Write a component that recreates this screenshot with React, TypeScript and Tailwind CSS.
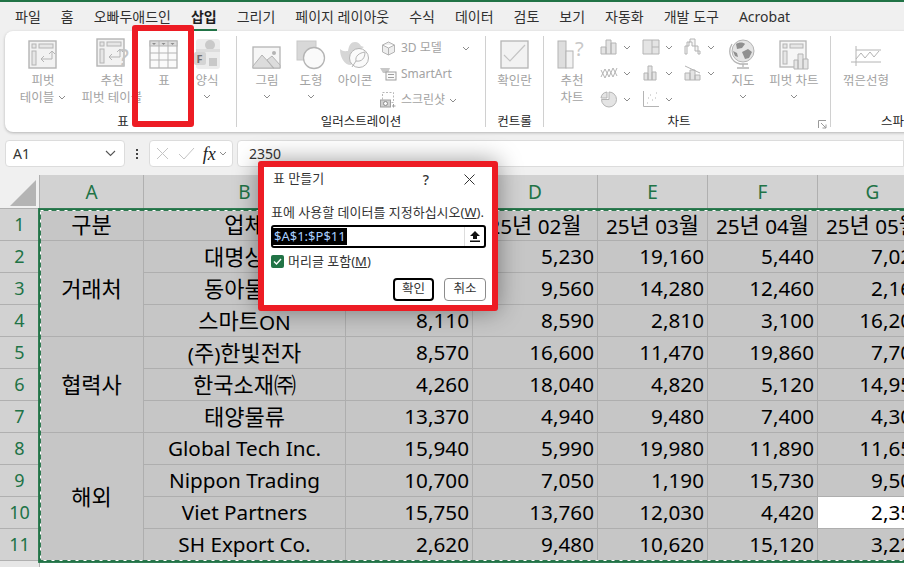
import React from "react";

const G = "#b4b4b4";
const L = "#e6e6e6";

const Chev = ({ className = "" }: { className?: string }) => (
  <svg width="8" height="5" viewBox="0 0 8 5" className={className}>
    <polyline points="1,1 4,4 7,1" fill="none" stroke="#8c8c8c" strokeWidth="1" />
  </svg>
);

const Pivot = () => (
  <svg width="30" height="30" viewBox="0 0 30 30">
    <rect x="1" y="1" width="27" height="27" fill="#f2f2f2" stroke={G} strokeWidth="1.4" />
    <rect x="4" y="4" width="4" height="4" fill={L} stroke={G} />
    <rect x="11" y="4" width="14" height="4" fill={L} stroke={G} />
    <rect x="4" y="11" width="4" height="14" fill={L} stroke={G} />
    <path d="M24 12v7h-11m3-3l-3 3 3 3M21 14l3-3 3 3" fill="none" stroke={G} />
  </svg>
);

const PivotQ = () => (
  <div className="relative w-[32px] h-[32px]">
    <Pivot />
    <span className="absolute right-[-1px] top-[7px] text-[24px] leading-[24px] text-[#c4c4c4]">?</span>
  </div>
);

const TableIcon = () => (
  <svg width="30" height="30" viewBox="0 0 30 30">
    <rect x="1" y="1" width="27" height="27" fill="#fafafa" stroke={G} strokeWidth="1.3" />
    <rect x="1" y="1" width="27" height="5" fill="#dcdcdc" stroke={G} />
    <path d="M10 1v27M19 1v27M1 13h27M1 20h27" stroke={G} fill="none" />
    <path d="M3 3h4l-2 2zM12.500 3h4l-2 2zM21.500 3h4l-2 2z" fill="#8c8c8c" />
  </svg>
);

const FormIcon = () => (
  <svg width="26" height="32" viewBox="0 0 26 32">
    <rect x="2" y="1" width="24" height="30" rx="3" fill="#ececec" />
    <circle cx="16" cy="7" r="5" fill="#c9c9c9" />
    <rect x="2" y="11" width="24" height="3" fill="#dddddd" />
    <rect x="15" y="20" width="8" height="8" fill="#c9c9c9" />
    <rect x="0" y="14" width="12" height="13" rx="2" fill="#d4d4d4" />
    <text x="2.500" y="25" fontSize="11" fontWeight="700" fill="#6f6f6f" fontFamily="Noto Sans">F</text>
  </svg>
);

const Picture = () => (
  <svg width="30" height="24" viewBox="0 0 30 24">
    <rect x="1" y="1" width="27" height="21" fill="#f6f6f6" stroke={G} strokeWidth="1.3" />
    <path d="M1 20l9-11 12 13H1zM15 14l5-4 8 9v3h-7z" fill="#dcdcdc" stroke={G} />
    <circle cx="22" cy="7" r="2" fill={G} />
  </svg>
);

const Shape = () => (
  <svg width="30" height="30" viewBox="0 0 30 30">
    <rect x="1" y="1" width="19" height="19" fill="#d8d8d8" stroke="#c8c8c8" />
    <circle cx="18" cy="18" r="10.500" fill="#fafafa" stroke={G} strokeWidth="1.3" />
  </svg>
);

const Duck = () => (
  <svg width="32" height="32" viewBox="0 0 32 32">
    <path d="M1 11c3 3 6 2 8 2 1-6 3-9 7-9 3 0 5 2 6 4l3 1-3 2c0 3-1 5-3 7-3 1-6 5-7 9-7 0-11-8-11-16z" fill="#d6d6d6" />
    <circle cx="20" cy="20" r="9.500" fill="#fafafa" stroke={G} />
    <path d="M13 29l4-6m0 0c-1-5 3-8 9-9 0 6-3 10-9 9z" fill="none" stroke={G} />
  </svg>
);

const Cube = () => (
  <svg width="15" height="15" viewBox="0 0 15 15">
    <path d="M7.500 1l6 3v7l-6 3-6-3V4zM1.500 4l6 3 6-3M7.500 7v7" fill="#eeeeee" stroke={G} />
  </svg>
);
const SmartArt = () => (
  <svg width="17" height="14" viewBox="0 0 17 14">
    <path d="M0 1h10l-2 5H3z" fill="#c8c8c8" />
    <rect x="6" y="5" width="10" height="8" fill="#fafafa" stroke="#9f9f9f" />
    <path d="M8 7.500h6M8 10.500h6" stroke="#9f9f9f" />
  </svg>
);
const Shot = () => (
  <svg width="16" height="16" viewBox="0 0 16 16">
    <rect x="2.500" y="0.500" width="11" height="10" fill="none" stroke="#b8b8b8" strokeDasharray="2 1.500" />
    <rect x="0.500" y="8" width="10" height="7" fill="#d0d0d0" stroke="#9f9f9f" />
    <circle cx="5.500" cy="11.500" r="2" fill="#fafafa" stroke="#8c8c8c" />
    <path d="M13.500 12v3.500M12 14h3.500" stroke="#9f9f9f" />
  </svg>
);

const CheckBoxIcon = () => (
  <svg width="30" height="30" viewBox="0 0 30 30">
    <rect x="1" y="1" width="27" height="27" fill="#f2f2f2" stroke={G} strokeWidth="1.3" />
    <path d="M4 15l6 6L25 5" fill="none" stroke="#c4c4c4" strokeWidth="1.2" />
  </svg>
);

const RecChart = () => (
  <svg width="30" height="30" viewBox="0 0 30 30">
    <rect x="1" y="1" width="8" height="27" fill="#dedede" stroke={G} />
    <rect x="9" y="11" width="7" height="17" fill="#f2f2f2" stroke={G} />
    <text x="18" y="16" fontSize="20" fill="#c8c8c8" fontFamily="Noto Sans">?</text>
  </svg>
);

const Mini = ({ d, fill = "#e4e4e4" }: { d: string; fill?: string }) => (
  <svg width="18" height="18" viewBox="0 0 18 18">
    <path d={d} fill={fill} stroke={G} />
  </svg>
);

const Big = ({
  icon,
  lines,
  chev,
  w,
}: {
  icon: React.ReactNode;
  lines: string[];
  chev?: "inline" | "below";
  w: string;
}) => (
  <div className={`flex flex-col items-center shrink-0 ${w}`}>
    <div className="flex items-end justify-center h-[34px]">{icon}</div>
    <div className="mt-[2px] flex flex-col items-center text-[12.5px] leading-[17px] text-[#a3a3a3] whitespace-nowrap">
      {lines.map((l, i) => (
        <div key={i} className="flex items-center gap-[4px]">
          {l}
          {chev === "inline" && i === lines.length - 1 ? <Chev /> : null}
        </div>
      ))}
      {chev === "below" ? <Chev className="mt-[5px]" /> : null}
    </div>
  </div>
);

const Small = ({ icon, label, chev = true, wide }: { icon: React.ReactNode; label: string; chev?: boolean; wide?: boolean }) => (
  <div className="flex items-center h-[26px] text-[12px] text-[#a3a3a3] whitespace-nowrap">
    <span className="w-[20px] flex justify-center">{icon}</span>
    <span className="ml-[3px]">{label}</span>
    {chev ? <Chev className={wide ? "ml-[20px]" : "ml-[4px]"} /> : null}
  </div>
);

const MiniBtn = ({ d, fill }: { d: string; fill?: string }) => (
  <div className="flex items-center gap-[5px] h-[26px] w-[42px]">
    <Mini d={d} fill={fill} />
    <Chev />
  </div>
);

const GroupLabel = ({ children }: { children: React.ReactNode }) => (
  <div className="h-[17px] mt-auto -mb-[3px] text-center text-[12.5px] leading-[17px] text-[#262626] whitespace-nowrap">{children}</div>
);

const Mix = ({ text }: { text: string }) => (
  <span className="whitespace-pre">
    {text.split(/([가-힣㈜]+)/).map((part, i) =>
      /[가-힣㈜]/.test(part) ? (
        <span key={i} className="text-[22px] align-[1px]">{part}</span>
      ) : (
        <span key={i}>{part}</span>
      )
    )}
  </span>
);

const tabs = ["파일", "홈", "오빠두애드인", "삽입", "그리기", "페이지 레이아웃", "수식", "데이터", "검토", "보기", "자동화", "개발 도구", "Acrobat"];

type Row = { h: string; a?: [string, string]; b: string; v: string[] };
const rows: Row[] = [
  { h: "2", a: ["거래처", "row-span-3"], b: "대명상사", v: ["12,480", "5,230", "19,160", "5,440", "7,020"] },
  { h: "3", b: "동아물류", v: ["6,240", "9,560", "14,280", "12,460", "2,160"] },
  { h: "4", b: "스마트ON", v: ["8,110", "8,590", "2,810", "3,100", "16,200"] },
  { h: "5", a: ["협력사", "row-span-3"], b: "(주)한빛전자", v: ["8,570", "16,600", "11,470", "19,860", "7,700"] },
  { h: "6", b: "한국소재㈜", v: ["4,260", "18,040", "4,820", "5,120", "14,950"] },
  { h: "7", b: "태양물류", v: ["13,370", "4,940", "9,480", "7,400", "4,300"] },
  { h: "8", a: ["해외", "row-span-4"], b: "Global Tech Inc.", v: ["15,940", "5,990", "19,980", "11,890", "11,650"] },
  { h: "9", b: "Nippon Trading", v: ["10,700", "7,050", "1,190", "15,730", "9,500"] },
  { h: "10", b: "Viet Partners", v: ["15,750", "13,760", "12,030", "4,420", "2,350"] },
  { h: "11", b: "SH Export Co.", v: ["2,620", "9,480", "10,620", "15,120", "3,220"] },
];

const cell = "flex items-center border-r border-b border-[#aeaeae] bg-[#c6c6c6] text-[20.7px] text-black whitespace-nowrap overflow-hidden pt-[1px]";
const ctr = `${cell} justify-center`;
const num = `${cell} justify-end pr-[3px]`;
const rowH = "flex items-center justify-center border-r border-b border-[#b0b0b0] bg-[#d2d2d2] text-[18px] text-[#217346]";
const colH = "flex items-center justify-center border-r border-[#b0b0b0] bg-[#d2d2d2] text-[19px] text-[#217346]";

export default function App() {
  return (
    <div className="relative w-[904px] h-[567px] overflow-hidden bg-[#f0f0f0] font-['Noto_Sans','Noto_Sans_CJK_KR',sans-serif]">
      <div className="h-[2px] bg-[#217346]" />
      {/* tabs */}
      <div className="flex gap-[20px] pl-[15px] h-[29px] items-center text-[14px] text-[#303030] whitespace-nowrap">
        {tabs.map((t) =>
          t === "삽입" ? (
            <div key={t} className="relative font-bold text-[#1e1e1e]">
              {t}
              <div className="absolute left-0 right-0 bottom-[-4px] h-[2px] bg-[#217346]" />
            </div>
          ) : (
            <div key={t}>{t}</div>
          )
        )}
      </div>
      {/* ribbon */}
      <div className="ml-[5px] w-[950px] h-[101px] flex bg-white rounded-l-[8px] shadow-[0_1px_3px_rgba(0,0,0,0.25)] py-[5px]">
        <div className="w-[232px] shrink-0 border-r border-[#d0d0d0] flex flex-col">
          <div className="flex">
            <Big w="w-[76px]" icon={<Pivot />} lines={["피벗", "테이블"]} chev="inline" />
            <Big w="w-[62px]" icon={<PivotQ />} lines={["추천", "피벗 테이블"]} />
            <Big w="w-[42px]" icon={<TableIcon />} lines={["표"]} />
            <Big w="w-[44px]" icon={<FormIcon />} lines={["양식"]} chev="below" />
          </div>
          <GroupLabel><span className="pl-[5px]">표</span></GroupLabel>
        </div>
        <div className="w-[249px] shrink-0 border-r border-[#d0d0d0] flex flex-col">
          <div className="flex pl-[8px]">
            <Big w="w-[44px]" icon={<Picture />} lines={["그림"]} chev="below" />
            <Big w="w-[44px]" icon={<Shape />} lines={["도형"]} chev="below" />
            <Big w="w-[44px]" icon={<Duck />} lines={["아이콘"]} />
            <div className="ml-[1px] flex flex-col mt-[-1px]">
              <Small icon={<Cube />} label="3D 모델" wide />
              <Small icon={<SmartArt />} label="SmartArt" chev={false} />
              <Small icon={<Shot />} label="스크린샷" />
            </div>
          </div>
          <GroupLabel>일러스트레이션</GroupLabel>
        </div>
        <div className="w-[58px] shrink-0 border-r border-[#d0d0d0] flex flex-col items-center">
          <Big w="w-[50px]" icon={<CheckBoxIcon />} lines={["확인란"]} />
          <GroupLabel>컨트롤</GroupLabel>
        </div>
        <div className="relative w-[287px] shrink-0 border-r border-[#d0d0d0] flex flex-col">
          <div className="flex pl-[7px]">
            <Big w="w-[42px]" icon={<RecChart />} lines={["추천", "차트"]} />
            <div className="ml-[7px] grid grid-cols-[42px_42px_42px] mt-[-2px] content-start">
              <MiniBtn d="M1 16V9h5v7zM6 16V2h5v14zM11 16V5h5v11z" />
              <MiniBtn d="M1 2h16v14H1zM10 2v14M10 9h7" />
              <MiniBtn d="M1 16V8h2V4h3V1h5v7h3v5h2v3h-2v-3h-3V8H8V4H5v4H3v8z" fill="#f6f6f6" />
              <MiniBtn d="M1 6l4 8 4-9 4 8 4-9M1 13l4-8 4 8 4-9 4 8" fill="none" />
              <MiniBtn d="M2 16v-7h4v7zM6 16V2h4v14zM10 16V8h4v8z" />
              <MiniBtn d="M1 16V9h5v7zM6 16V6h5v10zM11 16v-5h5v5zM1 2l15 7" />
              <MiniBtn d="M9 2a7.500 7.500 0 1 1-7.500 7.500H9zM1 8a7 7 0 0 1 6-6v6z" />
              <div className="flex items-center gap-[5px] h-[26px] w-[42px]">
                <svg width="18" height="18" viewBox="0 0 18 18">
                  <path d="M1.500 1v15.500H17" fill="none" stroke={G} />
                  <path d="M5 13h1M8 5h1M10 10h1M13 8h1M14 3h1M6 8h1" stroke={G} />
                </svg>
                <Chev />
              </div>
            </div>
            <Big w="w-[34px]" icon={
              <svg width="30" height="32" viewBox="0 0 30 32">
                <circle cx="15" cy="13" r="11" fill="#e4e4e4" stroke={G} />
                <path d="M8 6c3-2 7-2 9 0l-3 4-5 1zM14 14l6-3 4 3-3 6-4 1zM5 13l4 2 1 4-3-1z" fill="#8f8f8f" />
                <path d="M4 6C-1 14 3 24 12 26h8M15 26v3M9 30h12" fill="none" stroke={G} strokeWidth="1.300" />
              </svg>
            } lines={["지도"]} chev="below" />
            <Big w="w-[68px]" icon={
              <svg width="30" height="30" viewBox="0 0 30 30">
                <rect x="1" y="1" width="26" height="26" fill="#f6f6f6" stroke={G} strokeWidth="1.300" />
                <rect x="4" y="4" width="4" height="4" fill={L} stroke={G} />
                <rect x="11" y="4" width="13" height="4" fill={L} stroke={G} />
                <rect x="4" y="11" width="4" height="13" fill={L} stroke={G} />
                <path d="M15 29V20h4v9zM19 29V14h5v15zM24 29V19h5v10z" fill="#e6e6e6" stroke={G} />
              </svg>
            } lines={["피벗 차트"]} chev="below" />
          </div>
          <GroupLabel><span className="mr-[16px]">차트</span></GroupLabel>
          <svg width="9" height="9" viewBox="0 0 9 9" className="absolute right-[3px] bottom-[-2px]">
            <path d="M0.500 8V0.500H8M3 3l5 5M4.500 8H8V4.500" fill="none" stroke="#9a9a9a" />
          </svg>
        </div>
        <div className="w-[80px] shrink-0 flex flex-col pl-[4px]">
          <Big w="w-[62px]" icon={
            <svg width="30" height="30" viewBox="0 0 30 30">
              <path d="M0 22h30M5 10h25M5 6v20" stroke={G} fill="none" />
              <path d="M5 19l5-6 4 5 5-6 4 5 5-6" stroke={G} fill="none" />
            </svg>
          } lines={["꺾은선형"]} />
          <GroupLabel><span className="block text-left pl-[46px]">스파크라인</span></GroupLabel>
        </div>
      </div>
      {/* formula bar */}
      <div className="flex items-center mt-[8px] pl-[5px] h-[27px] gap-[4px]">
        <div className="w-[122px] h-[27px] flex items-center justify-between pl-[7px] pr-[8px] bg-white rounded-[4px] border border-[#dcdcdc] text-[14px] text-[#333]">
          A1
          <svg width="11" height="7" viewBox="0 0 11 7"><polyline points="1,1 5.500,5.500 10,1" fill="none" stroke="#555" strokeWidth="1.100" /></svg>
        </div>
        <div className="w-[16px] flex flex-col items-center gap-[2px]">
          <i className="w-[2px] h-[2px] bg-[#444]" /><i className="w-[2px] h-[2px] bg-[#444]" /><i className="w-[2px] h-[2px] bg-[#444]" />
        </div>
        <div className="w-[86px] h-[27px] flex items-center pl-[6px] bg-white rounded-[4px] border border-[#dcdcdc]">
          <svg width="13" height="13" viewBox="0 0 13 13"><path d="M1 1l11 11M12 1L1 12" stroke="#c4c4c4" fill="none" /></svg>
          <svg width="17" height="13" viewBox="0 0 17 13" className="ml-[9px]"><path d="M1 7l5 5L16 1" stroke="#c4c4c4" fill="none" /></svg>
          <span className="ml-[8px] text-[18px] leading-none italic font-['Liberation_Serif',serif] text-[#222]">fx</span>
          <Chev className="ml-[3px]" />
        </div>
        <div className="w-[680px] h-[27px] flex items-center pl-[11px] bg-white rounded-l-[4px] border border-[#dcdcdc] text-[14px] text-[#333]">2350</div>
      </div>
      {/* grid */}
      <div className="mt-[8px] w-[928px] grid grid-cols-[40px_104px_202px_127px_125px_110px_110px_110px] grid-rows-[34px_repeat(11,32px)_auto]">
        <div className="relative bg-[#f0f0f0] border-r border-b border-[#b0b0b0]">
          <div className="absolute right-[3px] bottom-[2px] w-0 h-0 border-l-[26px] border-l-transparent border-b-[26px] border-b-[#b4b4b4]" />
        </div>
        {["A", "B", "C", "D", "E", "F", "G"].map((c) => (
          <div key={c} className={colH}>{c}</div>
        ))}
        <div className={rowH}>1</div>
        <div className={ctr}><Mix text="구분" /></div>
        <div className={ctr}><Mix text="업체" /></div>
        {["01", "02", "03", "04", "05"].map((m) => (
          <div key={m} className={ctr}><Mix text={`25년 ${m}월`} /></div>
        ))}
        {rows.map((r) => (
          <React.Fragment key={r.h}>
            <div className={rowH}>{r.h}</div>
            {r.a ? <div className={`${ctr} ${r.a[1]}`}><Mix text={r.a[0]} /></div> : null}
            <div className={ctr}><Mix text={r.b} /></div>
            {r.v.map((v, i) => (
              <div key={i} className={r.h === "10" && i === 4 ? `${num} !bg-white` : num}>{v}</div>
            ))}
          </React.Fragment>
        ))}
        <div className="h-[6px] bg-[#e6e6e6] border-r border-[#b0b0b0]" />
        <div className="col-span-7 h-[6px] bg-white" />
      </div>
      {/* marching ants */}
      <svg width="880" height="358" viewBox="0 0 880 358" className="absolute left-[37px] top-[207px]">
        <rect x="2.500" y="2.500" width="900" height="352" fill="none" stroke="#217346" strokeWidth="2.800" />
        <rect x="3.500" y="3.500" width="900" height="350" fill="none" stroke="#ffffff" strokeWidth="1" strokeDasharray="3 5" />
      </svg>
      {/* highlight on the 표 button */}
      <div className="absolute left-[132px] top-[25px] w-[62px] h-[102px] border-[6px] border-[#ed1c24] rounded-[3px]" />
      {/* dialog */}
      <div className="absolute left-[258px] top-[161px] w-[240px] h-[150px] bg-white border-[6px] border-[#ed1c24] rounded-[3px] shadow-[0_0_24px_rgba(0,0,0,0.4)] px-[7px] text-[#333] text-[13px]">
        <div className="flex items-center h-[24px]">
          <span className="ml-[2px] text-[13px]">표 만들기</span>
          <span className="ml-auto mr-[35px] text-[14px] font-medium">?</span>
          <svg width="11" height="11" viewBox="0 0 11 11" className="mr-[10px]"><path d="M0.500 0.500l10 10M10.500 0.500l-10 10" stroke="#333" fill="none" /></svg>
        </div>
        <div className="mt-[13px] leading-[16px] whitespace-nowrap">표에 사용할 데이터를 지정하십시오(<u>W</u>).</div>
        <div className="mt-[5px] w-[215px] h-[23px] border-2 border-black rounded-[3px] flex items-center justify-between">
          <span className="bg-black text-[#a8cfff] text-[13px] leading-[17px] px-[1px]">$A$1:$P$11</span>
          <div className="w-[20px] h-full border-l border-[#dddddd] flex items-center justify-center">
            <svg width="10" height="11" viewBox="0 0 10 11"><path d="M5 0l5 5H7v3H3V5H0zM0 9.500h10v1.500H0z" fill="#111" /></svg>
          </div>
        </div>
        <div className="mt-[5px] flex items-center">
          <div className="w-[13px] h-[13px] rounded-[2px] bg-[#217346] flex items-center justify-center">
            <svg width="9" height="7" viewBox="0 0 9 7"><path d="M1 3.500l2.500 2.500L8 1" stroke="#fff" strokeWidth="1.400" fill="none" /></svg>
          </div>
          <span className="ml-[4px] leading-[16px]">머리글 포함(<u>M</u>)</span>
        </div>
        <div className="mt-[9px] flex justify-end gap-[10px] mr-[-1px]">
          <div className="w-[41px] h-[23px] flex items-center justify-center border-2 border-black rounded-[4px] text-[12.5px]">확인</div>
          <div className="w-[42px] h-[23px] flex items-center justify-center border border-[#8c8c8c] rounded-[4px] text-[12.5px]">취소</div>
        </div>
      </div>
    </div>
  );
}
